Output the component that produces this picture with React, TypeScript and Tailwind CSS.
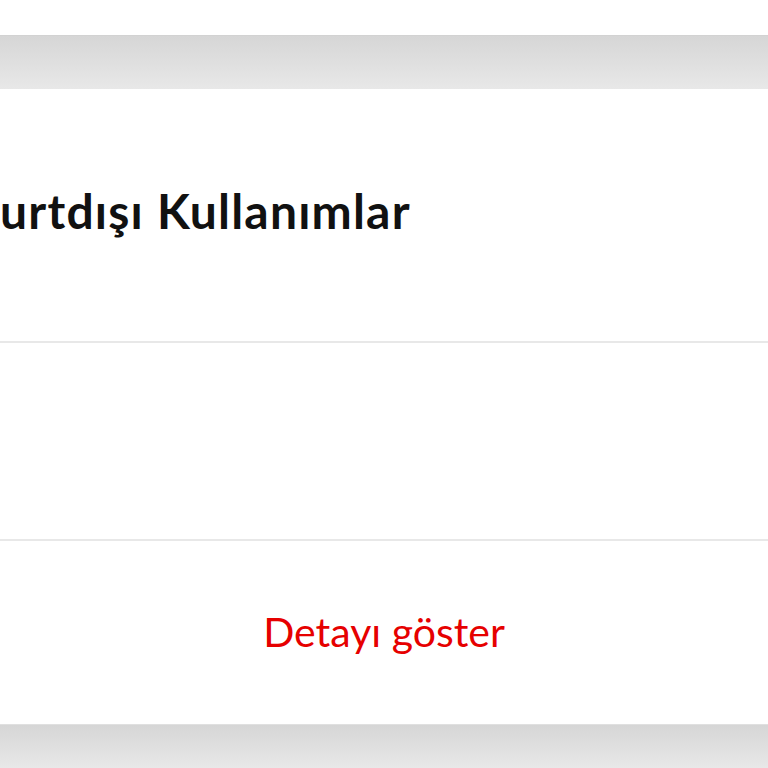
export default function App() {
	return (
		<div className="min-h-[768px] w-[768px] overflow-hidden bg-white" style={{ fontFamily: 'Lato, "Open Sans", sans-serif' }}>
			<div className="h-[35px] bg-white" />
			<div className="h-[54px] border-t border-[#d2d2d2] bg-gradient-to-b from-[#d6d6d6] to-[#e8e8e8]" />
			<main className="bg-white">
				<section className="flex h-[254px] items-center border-b-2 border-[#e8e8e8] pb-[8px]">
					<h1 className="whitespace-nowrap text-[48px] font-bold leading-none tracking-[1.2px] text-[#111]">urtdışı Kullanımlar</h1>
				</section>
				<section className="h-[198px] border-b-2 border-[#e8e8e8]" />
				<section className="flex h-[183px] items-center justify-center pb-[2px]">
					<button className="text-[41px] leading-none text-[#e60000]">Detayı göster</button>
				</section>
			</main>
			<div className="h-[44px] border-t border-[#e0e0e0] bg-gradient-to-b from-[#d6d6d6] to-[#e8e8e8]" />
		</div>
	);
}
